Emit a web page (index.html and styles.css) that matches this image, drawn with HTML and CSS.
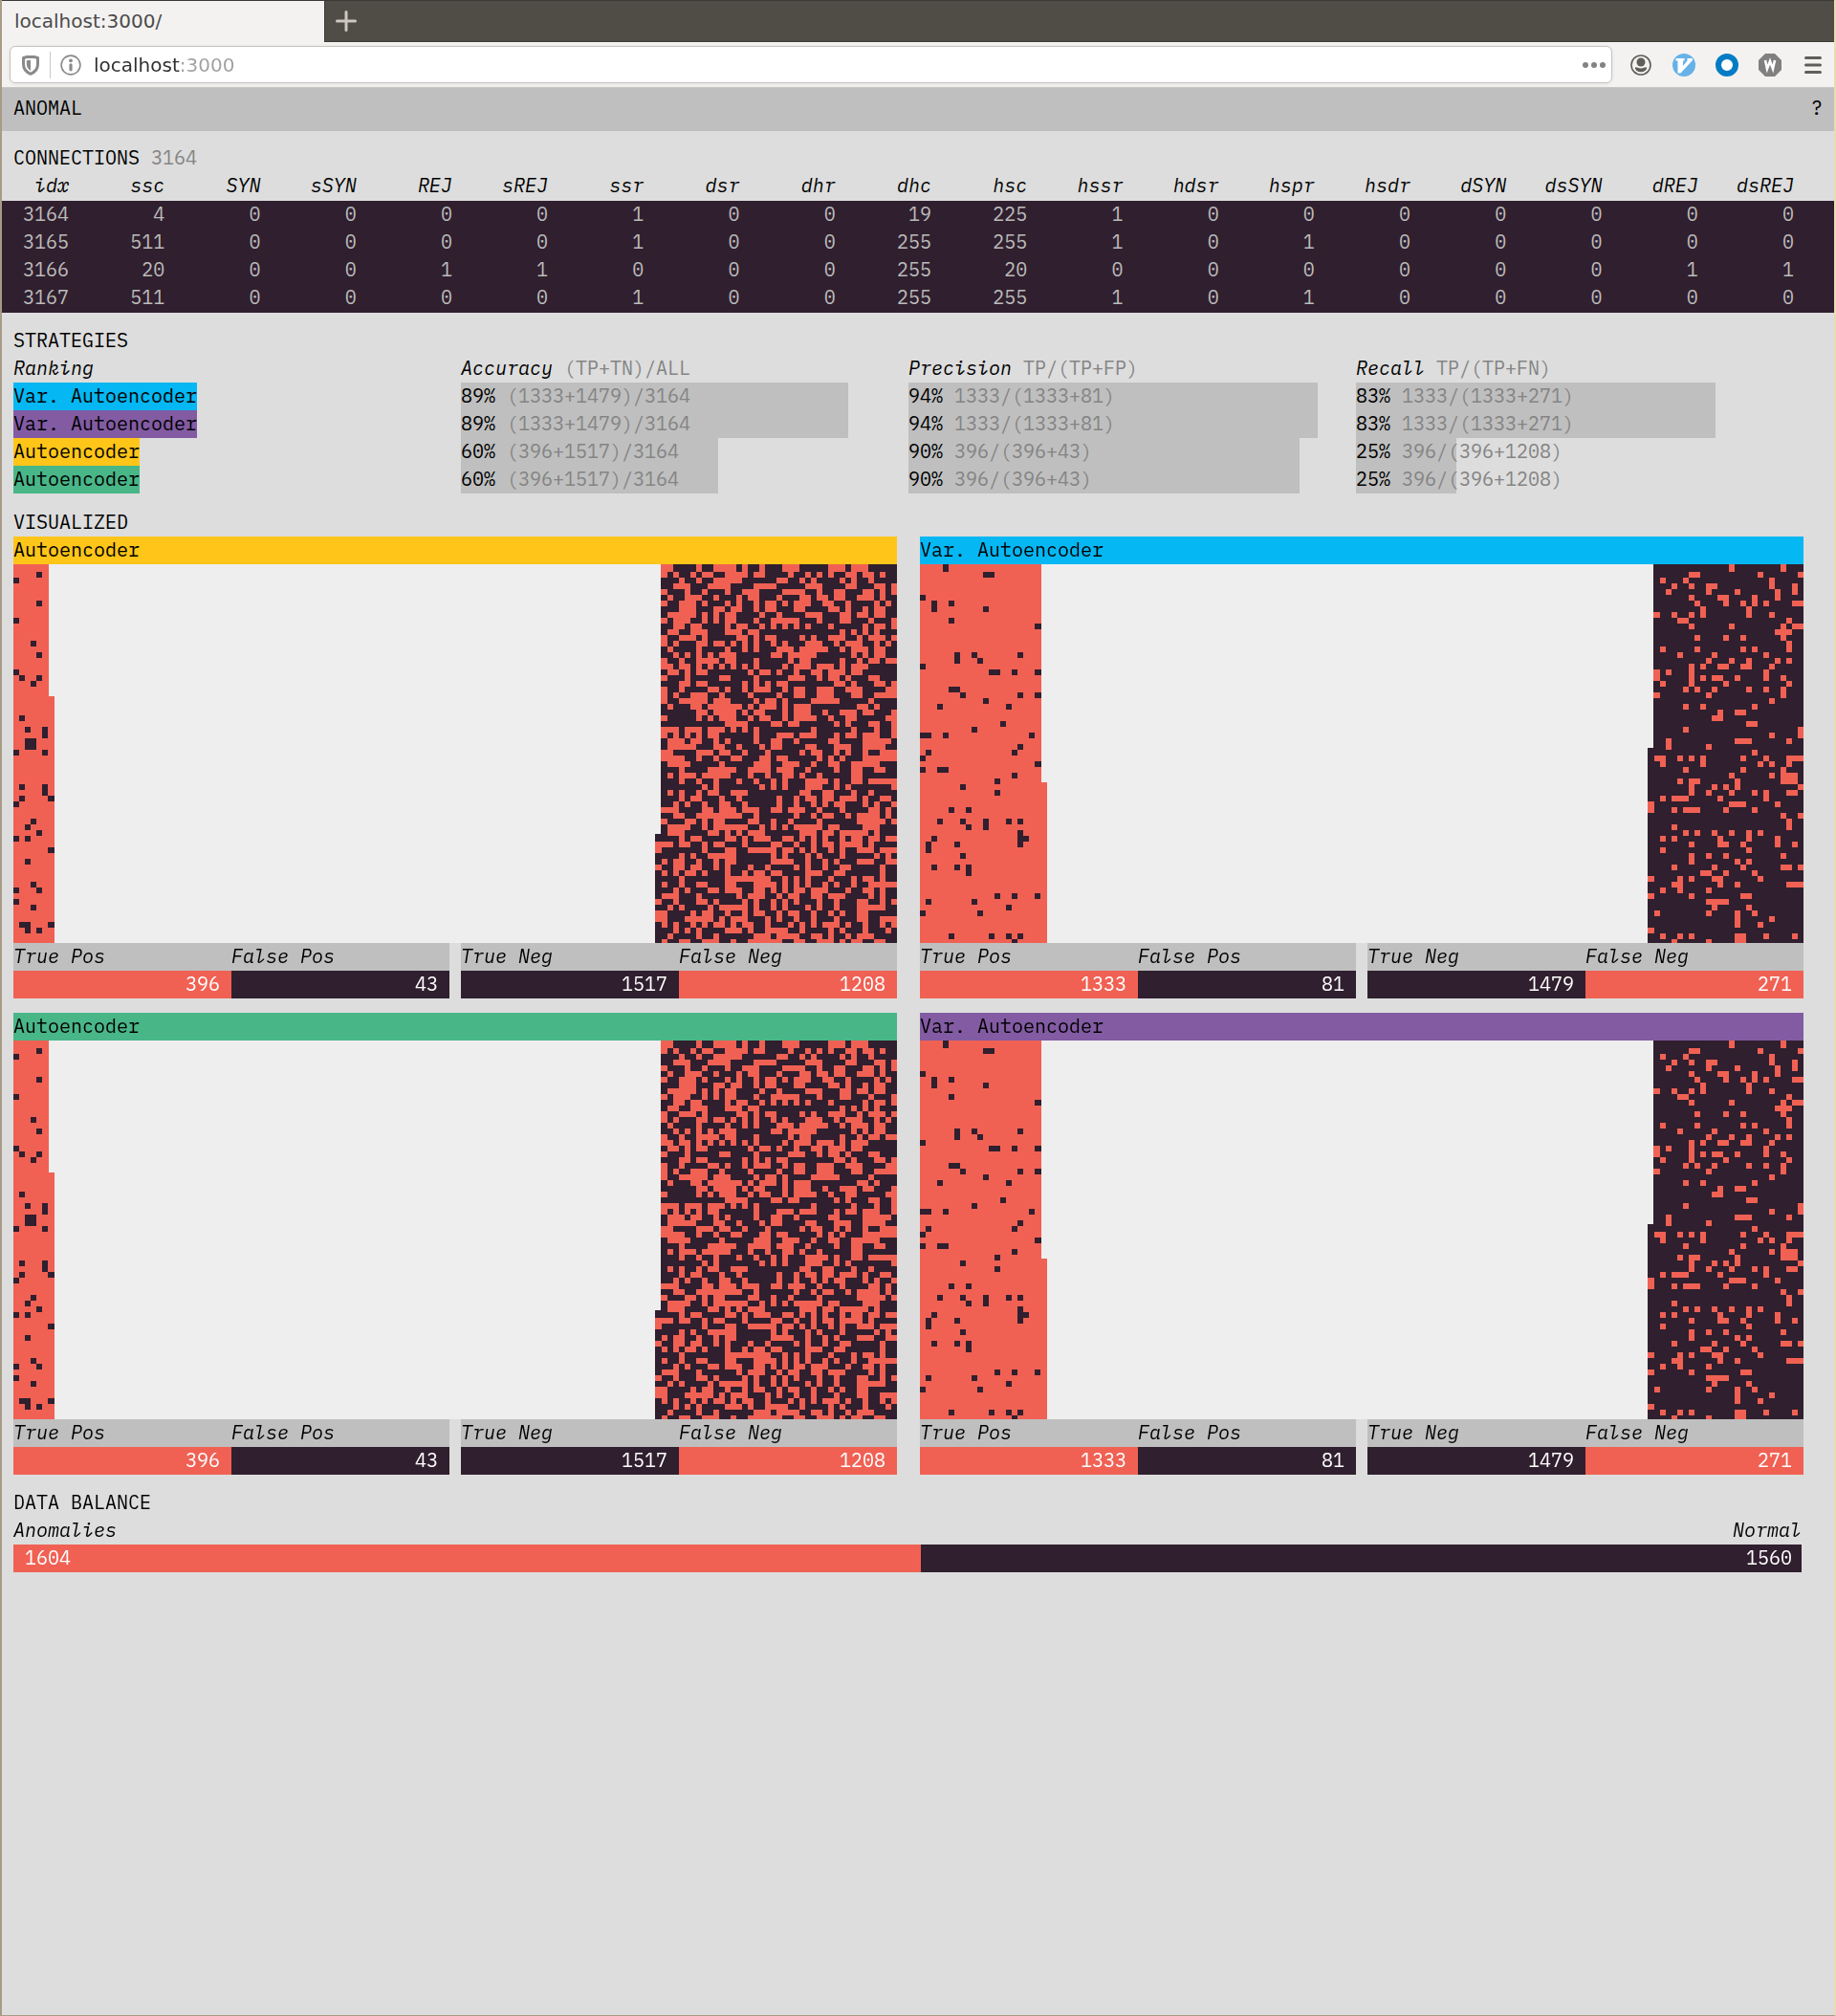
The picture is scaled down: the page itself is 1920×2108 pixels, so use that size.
FILE: index.html
```html
<!DOCTYPE html>
<html lang="en">
<head>
<meta charset="utf-8">
<meta name="viewport" content="width=device-width, initial-scale=1">
<title>localhost:3000/</title>
<link rel="stylesheet" href="styles.css">
</head>
<body>
<header class="browser">
  <div class="tabs">
    <div class="tab">localhost:3000/</div>
    <button class="new-tab" type="button" aria-label="New tab">
      <svg width="22" height="22" viewBox="0 0 22 22"><path d="M11 1.500v19M1.500 11h19" fill="none" stroke="#cbc8c0" stroke-width="3" stroke-linecap="round"/></svg>
    </button>
  </div>
  <div class="toolbar">
    <div class="urlbar">
      <svg class="shield" width="20" height="22" viewBox="0 0 20 22"><path d="M10 2.200c-2.800 0-5 .5-7.500 1.300v6.500c0 5 3 8.500 7.500 10.300 4.500-1.800 7.500-5.300 7.500-10.300V3.500C15 2.700 12.800 2.200 10 2.200z" fill="none" stroke="#8a8a8a" stroke-width="3" stroke-linejoin="round"/><path d="M10 5.700v11.200c-2.700-1.500-4.200-3.800-4.200-6.900V6.200z" fill="#8a8a8a"/></svg>
      <span class="divider"></span>
      <svg class="info" width="22" height="22" viewBox="0 0 22 22"><circle cx="11" cy="11" r="9.900" fill="none" stroke="#8a8a8a" stroke-width="1.600"/><circle cx="11" cy="6.300" r="1.900" fill="#8a8a8a"/><path d="M11 10.800v5" stroke="#8a8a8a" stroke-width="3.200" stroke-linecap="round"/></svg>
      <input class="address" type="text" value="localhost:3000" aria-label="Address" spellcheck="false">
      <button class="icon-button" type="button" aria-label="Page actions">
        <svg width="24" height="24" viewBox="0 0 24 24" fill="#838383"><circle cx="3" cy="12" r="3"/><circle cx="12" cy="12" r="3"/><circle cx="21" cy="12" r="3"/></svg>
      </button>
    </div>
    <button class="icon-button" type="button" aria-label="Account">
      <svg width="24" height="24" viewBox="0 0 24 24"><circle cx="12" cy="12" r="10" fill="none" stroke="#5f5e5b" stroke-width="1.600"/><circle cx="12" cy="9" r="4.500" fill="#5f5e5b"/><path d="M6 14.500c1.700-.8 2.500 1 6 1s4.300-1.800 6-1c.5 3-3 4.800-6 4.800s-6.500-1.800-6-4.800z" fill="#5f5e5b"/></svg>
    </button>
    <button class="icon-button" type="button" aria-label="Vim keys">
      <svg width="24" height="24" viewBox="0 0 24 24"><circle cx="12" cy="12" r="12" fill="#66b2e8"/><path d="M3.500 5h9v2.500h-1.500v5.500L15.500 7.500V5h5.500v2L8.500 20.500H5.500V7.500h-2z" fill="#fff"/></svg>
    </button>
    <button class="icon-button" type="button" aria-label="Containers">
      <svg width="24" height="24" viewBox="0 0 24 24"><circle cx="12" cy="12" r="9" fill="#fff" stroke="#047cc4" stroke-width="6"/></svg>
    </button>
    <button class="icon-button" type="button" aria-label="Blocker">
      <svg width="24" height="24" viewBox="0 0 24 24"><path d="M7 0h10l7 7v10l-7 7H7l-7-7V7z" fill="#808080"/><path d="M7 7l2 9 3-8 3 8 2-9" fill="none" stroke="#fff" stroke-width="2.600"/></svg>
    </button>
    <button class="icon-button" type="button" aria-label="Menu">
      <svg width="24" height="24" viewBox="0 0 24 24"><path d="M4.500 4.500h15M4.500 12h15M4.500 19.500h15" stroke="#5f5e5b" stroke-width="3" stroke-linecap="round"/></svg>
    </button>
  </div>
</header>

<div class="appbar">
  <h1>ANOMAL</h1>
  <a class="help" href="#help" aria-label="Help">?</a>
</div>

<main>
  <section class="connections">
    <h2>CONNECTIONS <span class="muted">3164</span></h2>
    <table>
      <thead>
        <tr><th>idx</th><th>ssc</th><th>SYN</th><th>sSYN</th><th>REJ</th><th>sREJ</th><th>ssr</th><th>dsr</th><th>dhr</th><th>dhc</th><th>hsc</th><th>hssr</th><th>hdsr</th><th>hspr</th><th>hsdr</th><th>dSYN</th><th>dsSYN</th><th>dREJ</th><th>dsREJ</th></tr>
      </thead>
      <tbody>
        <tr><td>3164</td><td>4</td><td>0</td><td>0</td><td>0</td><td>0</td><td>1</td><td>0</td><td>0</td><td>19</td><td>225</td><td>1</td><td>0</td><td>0</td><td>0</td><td>0</td><td>0</td><td>0</td><td>0</td></tr>
        <tr><td>3165</td><td>511</td><td>0</td><td>0</td><td>0</td><td>0</td><td>1</td><td>0</td><td>0</td><td>255</td><td>255</td><td>1</td><td>0</td><td>1</td><td>0</td><td>0</td><td>0</td><td>0</td><td>0</td></tr>
        <tr><td>3166</td><td>20</td><td>0</td><td>0</td><td>1</td><td>1</td><td>0</td><td>0</td><td>0</td><td>255</td><td>20</td><td>0</td><td>0</td><td>0</td><td>0</td><td>0</td><td>0</td><td>1</td><td>1</td></tr>
        <tr><td>3167</td><td>511</td><td>0</td><td>0</td><td>0</td><td>0</td><td>1</td><td>0</td><td>0</td><td>255</td><td>255</td><td>1</td><td>0</td><td>1</td><td>0</td><td>0</td><td>0</td><td>0</td><td>0</td></tr>
      </tbody>
    </table>
  </section>

  <section class="block">
    <h2>STRATEGIES</h2>
    <div class="strategies">
      <div>
        <h3>Ranking</h3>
        <ol>
          <li><span class="tag blue">Var. Autoencoder</span></li>
          <li><span class="tag purple">Var. Autoencoder</span></li>
          <li><span class="tag yellow">Autoencoder</span></li>
          <li><span class="tag green">Autoencoder</span></li>
        </ol>
      </div>
      <div>
        <h3>Accuracy <span class="muted">(TP+TN)/ALL</span></h3>
        <ol>
          <li class="rate" style="--rate: 89%">89% <span class="muted">(1333+1479)/3164</span></li>
          <li class="rate" style="--rate: 89%">89% <span class="muted">(1333+1479)/3164</span></li>
          <li class="rate" style="--rate: 60%">60% <span class="muted">(396+1517)/3164</span></li>
          <li class="rate" style="--rate: 60%">60% <span class="muted">(396+1517)/3164</span></li>
        </ol>
      </div>
      <div>
        <h3>Precision <span class="muted">TP/(TP+FP)</span></h3>
        <ol>
          <li class="rate" style="--rate: 94%">94% <span class="muted">1333/(1333+81)</span></li>
          <li class="rate" style="--rate: 94%">94% <span class="muted">1333/(1333+81)</span></li>
          <li class="rate" style="--rate: 90%">90% <span class="muted">396/(396+43)</span></li>
          <li class="rate" style="--rate: 90%">90% <span class="muted">396/(396+43)</span></li>
        </ol>
      </div>
      <div>
        <h3>Recall <span class="muted">TP/(TP+FN)</span></h3>
        <ol>
          <li class="rate" style="--rate: 83%">83% <span class="muted">1333/(1333+271)</span></li>
          <li class="rate" style="--rate: 83%">83% <span class="muted">1333/(1333+271)</span></li>
          <li class="rate" style="--rate: 25%">25% <span class="muted">396/(396+1208)</span></li>
          <li class="rate" style="--rate: 25%">25% <span class="muted">396/(396+1208)</span></li>
        </ol>
      </div>
    </div>
  </section>

  <section class="block visualized">
    <h2>VISUALIZED</h2>
    <div class="cards">
      <article>
        <h3 class="title yellow">Autoencoder</h3>
        <canvas width="924" height="396" data-model="ae"></canvas>
        <div class="stats">
          <dl><div><dt>True Pos</dt><dd class="red">396</dd></div><div><dt>False Pos</dt><dd class="dark">43</dd></div></dl>
          <dl><div><dt>True Neg</dt><dd class="dark">1517</dd></div><div><dt>False Neg</dt><dd class="red">1208</dd></div></dl>
        </div>
      </article>
      <article>
        <h3 class="title blue">Var. Autoencoder</h3>
        <canvas width="924" height="396" data-model="vae"></canvas>
        <div class="stats">
          <dl><div><dt>True Pos</dt><dd class="red">1333</dd></div><div><dt>False Pos</dt><dd class="dark">81</dd></div></dl>
          <dl><div><dt>True Neg</dt><dd class="dark">1479</dd></div><div><dt>False Neg</dt><dd class="red">271</dd></div></dl>
        </div>
      </article>
      <article>
        <h3 class="title green">Autoencoder</h3>
        <canvas width="924" height="396" data-model="ae"></canvas>
        <div class="stats">
          <dl><div><dt>True Pos</dt><dd class="red">396</dd></div><div><dt>False Pos</dt><dd class="dark">43</dd></div></dl>
          <dl><div><dt>True Neg</dt><dd class="dark">1517</dd></div><div><dt>False Neg</dt><dd class="red">1208</dd></div></dl>
        </div>
      </article>
      <article>
        <h3 class="title purple">Var. Autoencoder</h3>
        <canvas width="924" height="396" data-model="vae"></canvas>
        <div class="stats">
          <dl><div><dt>True Pos</dt><dd class="red">1333</dd></div><div><dt>False Pos</dt><dd class="dark">81</dd></div></dl>
          <dl><div><dt>True Neg</dt><dd class="dark">1479</dd></div><div><dt>False Neg</dt><dd class="red">271</dd></div></dl>
        </div>
      </article>
    </div>
  </section>

  <section class="block data-balance">
    <h2>DATA BALANCE</h2>
    <div class="balance-labels"><span>Anomalies</span><span>Normal</span></div>
    <div class="balance">
      <span class="red" style="flex-grow: 1604">1604</span>
      <span class="dark normal" style="flex-grow: 1560">1560</span>
    </div>
  </section>
</main>
<script src="app.js"></script>
</body>
</html>
```

FILE: styles.css
```css
* {
  box-sizing: border-box;
}

body {
  margin: 0;
  min-height: 100vh;
  border: solid #a99a86;
  border-width: 0 2px 1px;
  border-right-color: #ecdab2;
  background: #ddd;
  color: #000;
  font: 20px/27px "IBM Plex Mono", "Liberation Mono", monospace;
}

h1, h2, h3, ol, dl, dd {
  margin: 0;
  padding: 0;
  font-size: 20px;
  font-weight: 400;
}

/* Every text row is 29px tall: a 27px line and 2px under it. */
h2, h3, dd, .tag, .rate, .balance-labels, .balance span {
  padding-bottom: 2px;
}

ol {
  list-style: none;
}

button {
  padding: 0;
  border: 0;
  background: none;
}

svg {
  display: block;
}

.browser {
  font-family: "DejaVu Sans", sans-serif;
  background: #f4f2f1;
  color: #4b4b4b;
}

.tabs {
  display: flex;
  height: 44px;
  background: #504d46;
  border-top: 1px solid #3c3a35;
}

.tab {
  width: 337px;
  padding: 8px 13px;
  background: #f4f2f1;
}

.new-tab {
  flex: 1;
  padding-left: 11px;
  border: solid #3c3a35;
  border-width: 0 0 1px 1px;
}

.toolbar {
  display: flex;
  align-items: center;
  gap: 21px;
  height: 48px;
  padding: 0 10px 0 8px;
  border-bottom: 1px solid #c9c5c1;
}

.urlbar {
  display: flex;
  flex: 1;
  align-items: center;
  height: 39px;
  margin-right: -3px;
  padding: 0 6px 0 11px;
  border: 1px solid #c6c2be;
  border-radius: 6px;
  background: #fff;
  box-shadow: 0 1px 4px #0001;
}

.divider {
  width: 1px;
  height: 28px;
  margin: 0 10px;
  background: #c8c8c8;
}

.address {
  flex: 1;
  min-width: 0;
  height: 30px;
  margin-left: 13px;
  padding: 0;
  border: 0;
  outline: 0;
  font: 20px/30px "DejaVu Sans", sans-serif;
  background: linear-gradient(90deg, #2e2e2e 90px, #a0a0a0 90px);
  -webkit-background-clip: text;
  background-clip: text;
  color: transparent;
}

.appbar {
  display: flex;
  justify-content: space-between;
  height: 45px;
  padding: 7px 12px;
  background: #bfbfbf;
}

.help {
  color: #000;
  text-decoration: none;
}

.connections {
  padding-top: 14px;
}

.connections h2 {
  padding-left: 12px;
}

.muted {
  color: #848484;
  font-style: normal;
}

table {
  width: 100%;
  table-layout: fixed;
  border-collapse: separate;
  border-spacing: 0;
  border-bottom: 1px solid #301f2e;
  text-align: right;
}

th, td {
  padding: 0 42px 2px 0;
  font-weight: 400;
  white-space: nowrap;
  vertical-align: top;
}

th:first-child {
  width: 112px;
}

th {
  height: 30px;
  font-style: italic;
  text-align: right;
  direction: rtl;
}

tbody {
  background: #301f2e;
  color: #bbb;
}

.block {
  padding: 15px 32px 0 12px;
}

.strategies {
  display: grid;
  grid-template-columns: repeat(4, 1fr);
}

h3, dt {
  font-style: italic;
}

.tag {
  display: inline-block;
  vertical-align: top;
}

.rate {
  width: calc(var(--rate) - 12px);
  background: #bfbfbf;
  white-space: nowrap;
}

.visualized {
  padding-top: 16px;
}

.cards {
  display: grid;
  grid-template-columns: 1fr 1fr;
  gap: 15px 24px;
}

.title {
  font-style: normal;
}

canvas {
  display: block;
  width: 100%;
  height: auto;
  background: #eee;
}

.stats {
  display: flex;
  gap: 12px;
}

.stats dl {
  display: flex;
  flex: 1;
}

.stats dl div {
  flex: 1;
}

dt {
  height: 29px;
  background: #bfbfbf;
}

dd {
  padding-right: 12px;
  text-align: right;
}

.data-balance {
  padding-right: 34px;
}

.balance-labels {
  display: flex;
  justify-content: space-between;
  font-style: italic;
}

.balance {
  display: flex;
}

.balance span {
  flex-basis: 0;
  padding-left: 12px;
  padding-right: 12px;
}

.balance .normal {
  padding-right: 10px;
  text-align: right;
}

.red {
  background: #f06154;
  color: #fff;
}

.dark {
  background: #301f2e;
  color: #fff;
}

.blue {
  background: #05b7f2;
}

.purple {
  background: #825ba3;
}

.yellow {
  background: #ffc518;
}

.green {
  background: #49b688;
}
```

FILE: app.js
```js
const ROWS = 66;
const STEP = 6;
const SIZE = 8;
const RED = "#f06154";
const DARK = "#301f2e";

// Each row lists the exceptional cells of its side as columns or ranges.
// "split" is the first row that has the extra column.
const models = {
  ae: {
    left: {
      cols: 7, split: 23,
      rows: ["", "4", "0", "", "", "", "4", "", "", "0", "", "", "", "3", "", "4", "", "", "0", "1,4", "3", "", "",
        "", "", "", "1", "", "2,5", "5", "2-3", "2-3", "0,5", "", "", "", "", "", "1,5", "5", "1,6", "0", "", "", "3", "2",
        "4", "0,2", "", "6", "", "2", "", "", "", "3", "0,4", "", "0", "3", "", "", "1-2,6", "2,4", "", ""]
    },
    right: {
      cols: 42, split: 47,
      rows: [
        "1-2,7,10-13,15,18,22-24,30-32,34-36",
        "1,3,6,8-9,12-15,17-18,23,26,28,30,33-34,36-37,39",
        "4,7,10-14,21-22,25,27,32,34,37",
        "3-5,9-12,17-20,26-28,33-34,38-39,41",
        "1,5,8,12,15-17,22-25,28,31-32,36-37,39,41",
        "2,5-7,10,14,16-17,21,25-26,28-29,31-32,35-37,39",
        "1,4-6,8,12,14,17,19-20,22,24-26,29-30,33,38,40",
        "4-6,10-11,13-14,17,19-20,24-25,30-31,33,36,38-39",
        "2-6,8,10,12-13,18,21,26-28,32-33,35-36,38-39",
        "1,3-5,8,10,12-13,17,20-24,28,32-33,37,41",
        "3-4,6-7,12,14-15,18,20,22,24,26,30,36,38-39,41",
        "2-3,6-8,12-14,16-17,32,34,36,38",
        "1,4-6,8,14-15,17,19-20,25,27,30-32,35,37-39,41",
        "1,3,7-8,10-11,13,15,17,20,22,26-28,31,33-35,38,40",
        "2,7,12,15,17,21-23,25-29,32,34-36,38-39",
        "3,5,7,9,11-13,20-21,23-27,34,36,38-39",
        "1,4,7-10,12-13,17,23,25-26,32,35,37-38,40-41",
        "1-2,4-5,7,9,11,13,15,17,22,24-26,28-30,32,34-36",
        "2-3,5,7-8,16,18-19,21,24,27-28,30-32,34-35",
        "1,5,11-12,17,23-25,28,30-31,33,37-38",
        "4-5,7-8,15,17,19,21-22,31-32,34,38-39,41",
        "1,4,9-10,12,15,17-19,22,24-25,28-30,33-35,40-41",
        "1,3,6-8,11,16,21,24-25,28-30,34-35,38-41",
        "1,4-8,10-12,17,19-20,22,27-31,37",
        "2,6-7,9-14,16,18-20,22,24-26,35-36,38",
        "7-8,10-13,15,17-18,22,24-26,29,32-34,36-37,41",
        "1,7,9,11-13,16,18-19,22,24-27,30,33-34,40-41",
        "12-15,20-21,23-24,31,33,37-38,41",
        "1-3,5-7,9-11,13,15,17,27,34,38,41",
        "1,3,5,7,9-10,17,21-23,25-27,31,33-34,36-38,41",
        "2-4,6-7,10,12,17,20-21,24,30-31,36-40",
        "2-6,10-11,14,18,20-21,26-27,31-33,36-39",
        "1-2,7-9,11-12,15,19,25,27-28,31,33,36,39-41",
        "1-4,7,10,13-14,18-19,21-22,28,30,32,36-41",
        "2-5,11,17-19,22-24,27,30-31,34-38",
        "4,9-13,16-19,21-23,26,31,34-35,38-39",
        "2,4-6,8-12,16,19,22-23,25,28,34-35",
        "4,7,10,14,17,20,22,26-29,31,34-35,37-41",
        "8,10,18,20,22,26-28,31,33,41",
        "2,4,7,9-10,13-15,25-26,29-30,34,37",
        "4,6-7,11,14,21,24,26-27,29-30,32-34,36,39-40",
        "3,5,8,11-12,15,21,24,27,29,31-32,36,38,41",
        "1-3,8-9,11-13,15-17,20-21,23-25,28,32,37-38,40",
        "3-4,7-14,17,24,27,29-30,33,35-38,40",
        "1,5-6,8,10-11,16-17,20,23,28,35-39,41",
        "2-5,8,10-15,18,20,22,24-28,30-31,36-38",
        "2-4,9-10,12,14,16-18,25-27,29-30,32-36,38",
        "4,6-7,12-13,15,17-19,22-23,25,27,29,32,34-35,37-38,40-41",
        "0-2,4-5,8,10-11,15,20-21,24,27,29-30,32-35,37",
        "0,8,12-13,16-20,22-23,25,27,30,32,35-37,39-41",
        "4,6,9-13,20,22,26,28,32,38,40",
        "1,3-4,7,10,12-13,20-23,26,29,31,35-37,40-41",
        "0,3-4,6-7,10,12,16,19,24,26,29,32-33,39",
        "1,3,5-6,8,12,15,17-18,20-21,26-28,31-32,39",
        "4,12-19,22,24,26,30,34,36-37,39",
        "1,4,7-8,12-13,17-20,22,24,26,29,31,34,37-41",
        "3,5,9-10,12-14,17-18,20,22,24-25,27-29,33,36-37,39",
        "1-3,7,14,16-18,21,23-24,27-28,30-32,37,39",
        "0,3,7-8,10,15,17,20,22,24,28,31,35-36,39,41",
        "2,4,9,11-15,17,20,22,26,28,31,35-39",
        "0-1,6,8-9,12,15,17-18,21,23-24,27,30,32,35-36",
        "0-1,5-9,11,13-15,19,21,24,27,31,35-36,39-41",
        "1,3,6,8,10-11,13,15-16,19,23,25,27,29-31,33,36,39,41",
        "3,5,7,12-14,16,19-22,25,30,32,36,40",
        "2,7,10,17-19,21-24,27-28,30,33,35-37",
        "1,4-5,8-10,13,16-21,24-25,28-30,32,34-35,38-39"
      ]
    }
  },
  vae: {
    left: {
      cols: 22, split: 38,
      rows: ["4", "11-12", "", "", "", "0", "2,5", "2,11", "", "5", "20", "", "", "", "", "6,9,17", "6,10", "0",
        "12-13,16,20", "", "", "5-6", "7,17,20", "11", "3,15", "", "", "14", "9", "0-1,4,19", "", "17", "1,16", "0",
        "20", "0,3-4", "16", "13", "7", "13", "", "", "5,8", "", "3,7,11,15,17", "8,11", "17", "2,17-18", "1,6,17",
        "1", "7", "", "2,6,8", "8", "", "", "", "13,16,20", "1,9", "15", "0,10", "", "", "", "5,12,15,17", "16"]
    },
    right: {
      cols: 27, split: 32,
      rows: ["14,23", "7-8,19,26", "2,6,21", "4,7,10-11,21,25", "3,10,15,22,25", "7,12-13,18,22",
        "8,13,16,18,20,25-26", "9,17", "1,4,7,9,17,21", "5-6,24", "7,14,23,25-26", "22-24", "8,13,16,23", "24",
        "2,8,16,18,24", "5,11,20", "10,14,17,22,24", "7,9,12-13,16-17,21", "1,3,7,20", "1,7,9,11-12,15,20,23",
        "2,7,13,24", "6,8,11,17,20,23", "1,10,23", "21", "6,9,18", "12,15-16", "11-12", "17-18", "6,26", "21,26",
        "3,15-17,24", "3,10", "18", "1-2,5,7,9,16,20,24-26", "2,9,19,21,24", "6,16,23", "14,21,23-25",
        "5,7-8,15,23-25", "7,11,13,15,26", "7,10,14,18,20,24-25", "2,4-6,12,20", "0,14-16,22", "0,4,6-8,13,18",
        "23,26", "24", "4,24", "6,8,11,14,17,19", "2,4,12,17,22", "7,12-13,16,22,25", "2,17", "7,10,13,23",
        "7,15,17", "4,11,16,23-24,26", "9-10,13,18", "0,5,7,11-12,19", "4-5,12,15,24-26", "2,5,10", "0,7,16-17",
        "10-13", "11,17", "1,10,15,18", "15,21", "15,19", "0", "2,5,7,15-16,20,25", "4,10,15-16"]
    }
  }
};

function columns(text) {
  const found = new Set();
  for (const part of text.split(",").filter(Boolean)) {
    const [from, to = from] = part.split("-").map(Number);
    for (let c = from; c <= to; c++) found.add(c);
  }
  return found;
}

function draw(canvas) {
  const ctx = canvas.getContext("2d");
  const { left, right } = models[canvas.dataset.model];
  for (let r = ROWS - 1; r >= 0; r--) {
    const y = r * STEP;
    const falsePos = columns(left.rows[r]);
    const leftCols = r >= left.split ? left.cols : left.cols - 1;
    for (let c = 0; c < leftCols; c++) {
      ctx.fillStyle = falsePos.has(c) ? DARK : RED;
      ctx.fillRect(c * STEP, y, SIZE - 1, SIZE);
    }
    const falseNeg = columns(right.rows[r]);
    const first = r >= right.split ? 0 : 1;
    for (let c = right.cols - 1; c >= first; c--) {
      ctx.fillStyle = falseNeg.has(c) ? RED : DARK;
      ctx.fillRect(canvas.width - (right.cols - c) * STEP - 1, y, SIZE - 1, SIZE);
    }
  }
}

document.querySelectorAll("canvas").forEach(draw);
```
